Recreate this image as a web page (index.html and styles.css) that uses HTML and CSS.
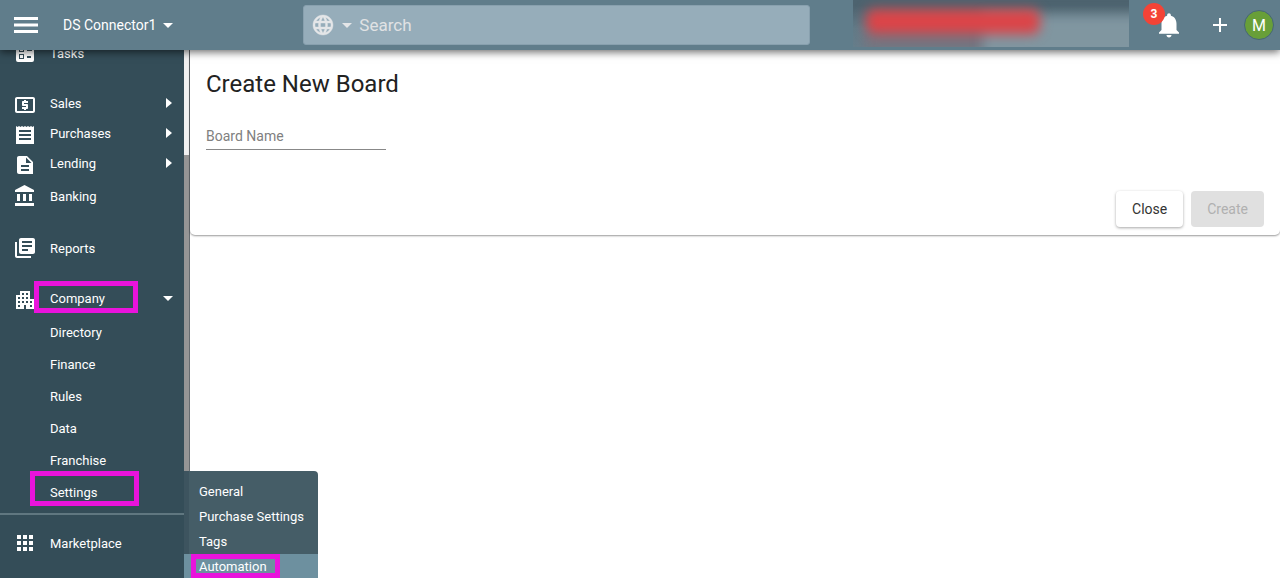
FILE: index.html
```html
<!DOCTYPE html>
<html lang="en">
<head>
<meta charset="utf-8">
<title>Create New Board</title>
<link rel="stylesheet" href="styles.css">
</head>
<body>
<header class="topbar">
  <button class="icon-btn menu-btn" aria-label="Menu"><svg width="24" height="16" viewBox="0 0 24 16"><path d="M0 0h24v3H0zM0 6.500h24v3H0zM0 13h24v3H0z"/></svg></button>
  <button class="account">DS Connector1 <span class="caret-down"></span></button>
  <div class="search">
    <button class="icon-btn scope" aria-label="Search scope"><svg width="24" height="24" viewBox="0 0 24 24"><path stroke="currentColor" stroke-width=".4" d="M11.99 2C6.47 2 2 6.48 2 12s4.47 10 9.99 10C17.52 22 22 17.52 22 12S17.52 2 11.99 2zm6.93 6h-2.95c-.32-1.25-.78-2.45-1.38-3.56 1.84.63 3.37 1.91 4.33 3.56zM12 4.04c.83 1.2 1.48 2.53 1.91 3.96h-3.82c.43-1.43 1.08-2.76 1.91-3.96zM4.26 14C4.1 13.36 4 12.69 4 12s.1-1.36.26-2h3.38c-.08.66-.14 1.32-.14 2 0 .68.06 1.34.14 2H4.26zm.82 2h2.95c.32 1.25.78 2.45 1.38 3.56-1.84-.63-3.37-1.9-4.33-3.56zm2.95-8H5.08c.96-1.66 2.49-2.93 4.33-3.56C8.81 5.55 8.35 6.75 8.03 8zM12 19.96c-.83-1.2-1.48-2.53-1.91-3.96h3.82c-.43 1.43-1.08 2.76-1.91 3.96zM14.34 14H9.66c-.09-.66-.16-1.32-.16-2 0-.68.07-1.35.16-2h4.68c.09.65.16 1.32.16 2 0 .68-.07 1.34-.16 2zm.25 5.56c.6-1.11 1.06-2.31 1.38-3.56h2.95c-.96 1.65-2.49 2.93-4.33 3.56zM16.36 14c.08-.66.14-1.32.14-2 0-.68-.06-1.34-.14-2h3.38c.16.64.26 1.31.26 2s-.1 1.36-.26 2h-3.38z"/></svg><span class="caret-down"></span></button>
    <input class="search-input" type="search" placeholder="Search" aria-label="Search">
  </div>
  <div class="redacted"><span class="smear-dark"></span><span class="smear-light"></span><span class="smear-red"></span></div>
  <div class="actions">
    <button class="icon-btn bell" aria-label="Notifications"><svg width="30" height="30" viewBox="0 0 24 24"><path d="M12 22c1.1 0 2-.9 2-2h-4c0 1.1.89 2 2 2zm6-6v-5c0-3.07-1.64-5.64-4.5-6.32V4c0-.83-.67-1.5-1.5-1.5s-1.500.67-1.500 1.500v.68C7.630 5.360 6 7.920 6 11v5l-2 2v1h16v-1l-2-2z"/></svg><span class="badge">3</span></button>
    <button class="icon-btn add" aria-label="Add"><svg width="24" height="24" viewBox="0 0 24 24"><path d="M19 13h-6v6h-2v-6H5v-2h6V5h2v6h6z"/></svg></button>
    <button class="avatar">M</button>
  </div>
</header>
<div class="shell">
  <nav class="sidebar">
    <div class="group group-first">
      <a class="item" href="#"><svg class="icon" viewBox="0 0 24 24"><path fill-rule="evenodd" d="M5 2h14a2 2 0 0 1 2 2v15a2 2 0 0 1-2 2H5a2 2 0 0 1-2-2V4c0-1.100.9-2 2-2zM6 6v5h5V6zm1 1h3v3H7zm7 1v2h5V8zM6 13v5h5v-5zm1 1h3v3H7zm7 1v2h4v-2z"/></svg>Tasks</a>
    </div>
    <div class="group group-money">
      <a class="item" href="#"><svg class="icon" viewBox="0 0 24 24"><path d="M11 17h2v-1h1c.55 0 1-.45 1-1v-3c0-.55-.45-1-1-1h-3v-1h4V8h-2V7h-2v1h-1c-.55 0-1 .45-1 1v3c0 .55.45 1 1 1h3v1H9v2h2v1zm9-13H4c-1.110 0-1.990.89-1.990 2L2 18c0 1.110.89 2 2 2h16c1.110 0 2-.89 2-2V6c0-1.110-.89-2-2-2zm0 14H4V6h16v12z"/></svg>Sales<span class="caret-right"></span></a>
      <a class="item" href="#"><svg class="icon" viewBox="0 0 24 24"><path d="M18 17H6v-2h12v2zm0-4H6v-2h12v2zm0-4H6V7h12v2zM3 21h18V3l-1.500 1L18 3l-1.500 1L15 3l-1.500 1L12 3l-1.500 1L9 3 7.500 4 6 3 4.500 4 3 3v18z"/></svg>Purchases<span class="caret-right"></span></a>
      <a class="item" href="#"><svg class="icon" viewBox="0 0 24 24"><path d="M14 3H6c-1.100 0-2 .9-2 2v14c0 1.100.9 2 2 2h14V9l-6-6zm2 15H8v-2h8v2zm0-4H8v-2h8v2zm-3-4V4.500L18.500 10H13z"/></svg>Lending<span class="caret-right"></span></a>
      <a class="item" href="#"><svg class="icon" viewBox="0 0 24 24"><path d="M4 10v7h3v-7H4zm6 0v7h3v-7h-3zM2 22h19v-3H2v3zm14-12v7h3v-7h-3zm-4.500-9L2 6v2h19V6l-9.500-5z"/></svg>Banking</a>
    </div>
    <div class="group">
      <a class="item" href="#"><svg class="icon" viewBox="0 0 24 24"><path d="M4 6H2v14c0 1.100.9 2 2 2h14v-2H4V6zm16-4H8c-1.100 0-2 .9-2 2v12c0 1.100.9 2 2 2h12c1.100 0 2-.9 2-2V4c0-1.100-.9-2-2-2zm-1 9H9V9h10v2zm-4 4H9v-2h6v2zm4-8H9V5h10v2z"/></svg>Reports</a>
    </div>
    <div class="group group-company">
      <a class="item marked-company" href="#"><svg class="icon" viewBox="0 0 24 24"><path d="M17 11V3H7v4H3v14h8v-4h2v4h8V11h-4zM7 19H5v-2h2v2zm0-4H5v-2h2v2zm0-4H5V9h2v2zm4 4H9v-2h2v2zm0-4H9V9h2v2zm0-4H9V5h2v2zm4 8h-2v-2h2v2zm0-4h-2V9h2v2zm0-4h-2V5h2v2zm4 12h-2v-2h2v2zm0-4h-2v-2h2v2z"/></svg>Company<span class="caret-down"></span></a>
      <div class="subnav">
        <a class="item" href="#">Directory</a>
        <a class="item" href="#">Finance</a>
        <a class="item" href="#">Rules</a>
        <a class="item" href="#">Data</a>
        <a class="item" href="#">Franchise</a>
        <a class="item marked-settings" href="#">Settings</a>
      </div>
    </div>
    <div class="market">
      <a class="item" href="#"><svg class="icon" viewBox="0 0 24 24"><path d="M4 4h4v4H4zM10 4h4v4h-4zM16 4h4v4h-4zM4 10h4v4H4zM10 10h4v4h-4zM16 10h4v4h-4zM4 16h4v4H4zM10 16h4v4h-4zM16 16h4v4h-4z"/></svg>Marketplace</a>
    </div>
  </nav>
  <div class="scrollbar"></div>
  <main class="content">
    <form class="card">
      <h1 class="title">Create New Board</h1>
      <input class="field" type="text" placeholder="Board Name" aria-label="Board Name">
      <div class="buttons">
        <button class="btn" type="button">Close</button>
        <button class="btn" type="submit" disabled>Create</button>
      </div>
    </form>
  </main>
  <div class="flyout">
    <a class="flyout-item" href="#">General</a>
    <a class="flyout-item" href="#">Purchase Settings</a>
    <a class="flyout-item" href="#">Tags</a>
    <a class="flyout-item active" href="#">Automation</a>
  </div>
</div>
</body>
</html>
```
FILE: styles.css
```css
*, ::before, ::after { box-sizing: border-box; }
body {
  margin: 0;
  height: 100vh;
  display: flex;
  flex-direction: column;
  overflow: hidden;
  background: #fff;
  font-family: Roboto, "Liberation Sans", sans-serif;
}
button, input { font: inherit; border: 0; padding: 0; background: none; color: inherit; }
a { color: inherit; text-decoration: none; }
svg { display: block; fill: currentColor; flex: none; }

.topbar {
  position: relative;
  z-index: 2;
  flex: none;
  height: 50px;
  display: flex;
  align-items: center;
  padding: 0 6px 0 14px;
  background: #607d8b;
  color: #fff;
  box-shadow: 0 2px 8px rgba(0, 0, 0, .6);
}
.icon-btn { display: flex; align-items: center; }
.account { display: flex; align-items: center; gap: 7px; margin-left: 25px; font-size: 14px; }
.caret-down { border: 5px solid transparent; border-top-color: currentColor; border-bottom: 0; }
.caret-right { border: 5px solid transparent; border-left: 6px solid currentColor; border-right: 0; }
.search {
  flex: 1 1 507px;
  max-width: 507px;
  height: 40px;
  display: flex;
  align-items: center;
  gap: 7px;
  margin-left: 130px;
  padding: 0 7px;
  border: 1px solid #88a0ae;
  border-radius: 3px;
  background: #96adba;
  color: #e4e6e8;
}
.scope { gap: 7px; }
.search-input { flex: 1; min-width: 0; outline: 0; font-size: 17px; }
.search-input::placeholder { color: #e0e2e4; opacity: 1; }
.redacted {
  position: relative;
  align-self: flex-start;
  width: 276px;
  height: 47px;
  margin-left: auto;
  overflow: hidden;
  background: linear-gradient(#4d636f 12%, #627b88 60%, #657e8b);
}
.redacted span { position: absolute; filter: blur(6px); }
.smear-dark { left: 10px; top: 34px; width: 150px; height: 16px; background: #77747f; }
.smear-light { left: 130px; top: 15px; width: 160px; height: 44px; background: #8096a0; }
.redacted .smear-red { left: 13px; top: 9px; width: 174px; height: 25px; border-radius: 8px; background: #dc4448; }
.actions { display: flex; align-items: center; margin-left: 25px; }
.add { margin: 0 12px 0 24px; }
.bell { position: relative; }
.badge {
  position: absolute;
  left: -11px;
  top: -7px;
  width: 22px;
  height: 22px;
  border-radius: 50%;
  background: #f44336;
  font-size: 12px;
  font-weight: 700;
  line-height: 22px;
  text-align: center;
}
.avatar {
  width: 30px;
  height: 30px;
  border: 1px solid #45657a;
  border-radius: 50%;
  background: #689f38;
  font-size: 16px;
}

.shell { position: relative; flex: 1; min-height: 0; display: flex; overflow: hidden; }
.sidebar { width: 184px; flex: none; overflow: hidden; background: #344d58; color: #fff; font-size: 13px; }
.group { margin-bottom: 18px; }
.group-first { margin: -13px 0 19px; }
.item { position: relative; display: flex; align-items: center; gap: 13px; height: 32px; padding: 0 11px 0 13px; }
.group-money .item { height: 30px; }
.group-money .item:last-child { height: 36px; }
.icon { width: 24px; height: 24px; }
.group-company .icon, .group-money .icon { margin-top: 3px; }
.group-money .item:last-child .icon { margin-top: 0; }
.item .caret-right, .item .caret-down { margin-left: auto; }
.item .caret-right { margin-right: 1px; }
.subnav { padding-top: 2px; }
.subnav .item { padding-left: 50px; }
.marked-company::after, .marked-settings::after, .active::after {
  content: "";
  position: absolute;
  border: 5px solid #e913dc;
}
.marked-company::after { left: 34px; top: -1px; width: 104px; height: 32px; }
.marked-settings::after { left: 30px; top: -5px; width: 109px; height: 35px; }
.group-company { margin-bottom: 5px; }
.market { border-top: 2px solid #607780; padding-top: 12px; }
.scrollbar {
  width: 6px;
  flex: none;
  border-right: 1px solid #666c70;
  background: linear-gradient(#f1f1f1 105px, #959595 105px);
}

.content { flex: 1; min-width: 0; }
.card {
  padding: 18px 16px 8px;
  border-radius: 0 0 5px 5px;
  box-shadow: 0 1px 2px rgba(0, 0, 0, .4);
  color: #222;
}
.title { margin: 0; font-size: 24px; font-weight: 400; line-height: 32px; }
.field {
  display: block;
  width: 180px;
  height: 28px;
  margin-top: 22px;
  border-bottom: 1px solid #888;
  font-size: 14px;
  outline: 0;
}
.field::placeholder { color: #808080; opacity: 1; }
.buttons { display: flex; justify-content: flex-end; gap: 8px; margin-top: 41px; }
.btn {
  height: 36px;
  padding: 0 16px;
  border-radius: 4px;
  background: #fff;
  box-shadow: 0 1px 3px rgba(0, 0, 0, .35);
  font-size: 14px;
  color: #333;
}
.btn:disabled { background: #e0e0e0; box-shadow: none; color: #b0b0b0; }

.flyout {
  position: absolute;
  left: 184px;
  bottom: -1px;
  width: 134px;
  padding-top: 8px;
  border-radius: 0 4px 0 0;
  background: linear-gradient(90deg, #3d545f 5px, #455d67 5px);
  color: #fff;
  font-size: 13px;
}
.flyout-item { position: relative; display: block; height: 25px; padding-left: 15px; line-height: 25px; }
.active { background: #6d909f; }
.active::after { left: 7px; top: 0; width: 89px; height: 24px; }
```
